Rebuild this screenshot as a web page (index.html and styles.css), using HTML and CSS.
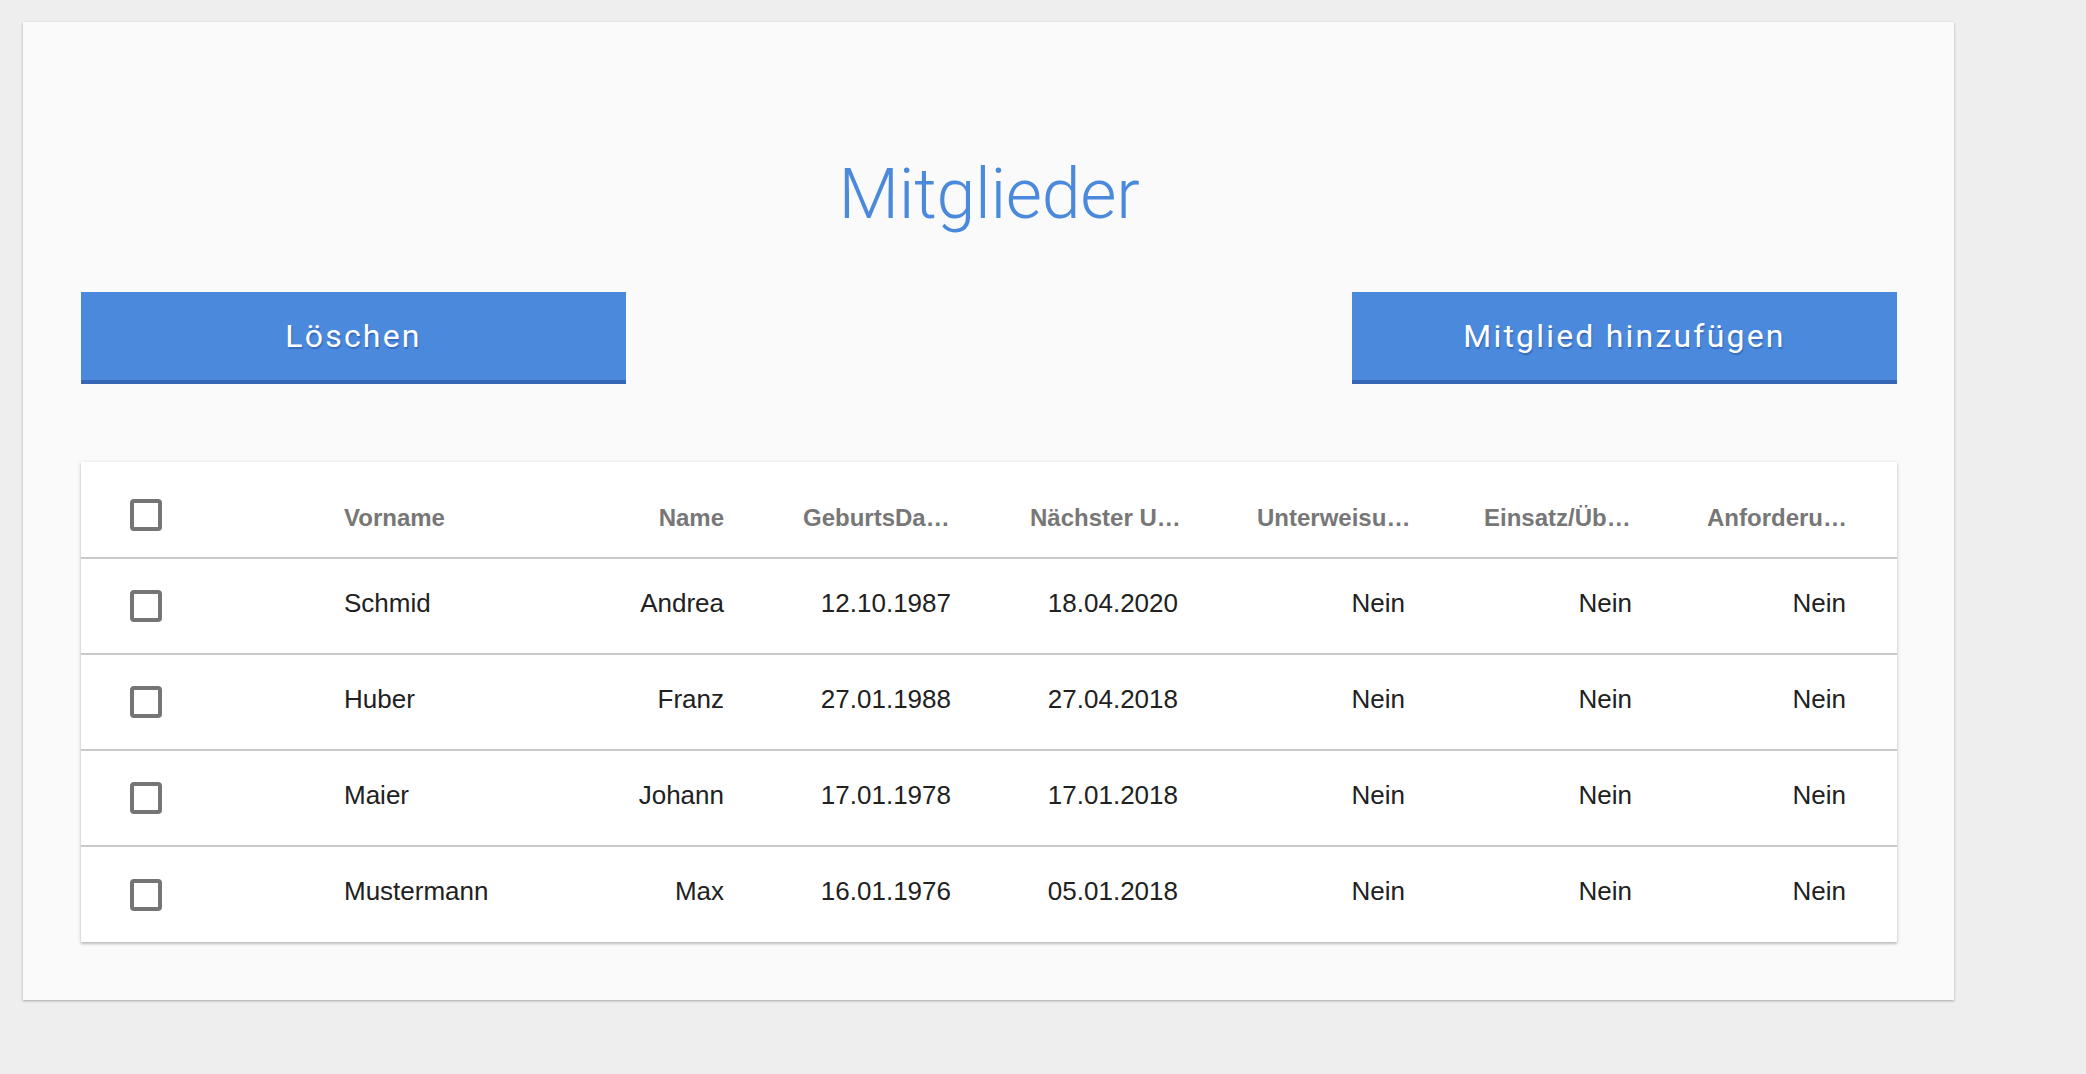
FILE: index.html
```html
<!DOCTYPE html>
<html lang="de">
<head>
<meta charset="utf-8">
<title>Mitglieder</title>
<link rel="stylesheet" href="styles.css">
</head>
<body>
<main class="card">
  <h1 class="title">Mitglieder</h1>
  <div class="actions">
    <button class="btn">Löschen</button>
    <button class="btn">Mitglied hinzufügen</button>
  </div>
  <div class="table-wrap">
    <table class="members">
      <colgroup>
        <col class="c-check">
        <col class="c-first">
        <col class="c-mid">
        <col class="c-mid">
        <col class="c-mid">
        <col class="c-mid">
        <col class="c-mid">
        <col class="c-last">
      </colgroup>
      <thead>
        <tr>
          <th class="check"><span class="box"></span></th>
          <th class="left">Vorname</th>
          <th class="plain">Name</th>
          <th>GeburtsDatum</th>
          <th>Nächster Untersuchungstermin</th>
          <th>Unterweisung</th>
          <th>Einsatz/Übung</th>
          <th class="last">Anforderung</th>
        </tr>
      </thead>
      <tbody>
        <tr>
          <td class="check"><span class="box"></span></td>
          <td class="left">Schmid</td>
          <td>Andrea</td>
          <td>12.10.1987</td>
          <td>18.04.2020</td>
          <td>Nein</td>
          <td>Nein</td>
          <td class="last">Nein</td>
        </tr>
        <tr>
          <td class="check"><span class="box"></span></td>
          <td class="left">Huber</td>
          <td>Franz</td>
          <td>27.01.1988</td>
          <td>27.04.2018</td>
          <td>Nein</td>
          <td>Nein</td>
          <td class="last">Nein</td>
        </tr>
        <tr>
          <td class="check"><span class="box"></span></td>
          <td class="left">Maier</td>
          <td>Johann</td>
          <td>17.01.1978</td>
          <td>17.01.2018</td>
          <td>Nein</td>
          <td>Nein</td>
          <td class="last">Nein</td>
        </tr>
        <tr>
          <td class="check"><span class="box"></span></td>
          <td class="left">Mustermann</td>
          <td>Max</td>
          <td>16.01.1976</td>
          <td>05.01.2018</td>
          <td>Nein</td>
          <td>Nein</td>
          <td class="last">Nein</td>
        </tr>
      </tbody>
    </table>
  </div>
</main>
</body>
</html>
```

FILE: styles.css
```css
html, body {
  margin: 0;
  padding: 0;
}

body {
  background: #eeeeee;
  padding: 22px 0 0 23px;
  font-family: "Liberation Sans", Arial, sans-serif;
  min-height: 1074px;
  box-sizing: border-box;
}

.card {
  display: flex;
  flex-direction: column;
  width: 1931px;
  height: 978px;
  box-sizing: border-box;
  background: #fafafa;
  padding: 0 57px 0 58px;
  box-shadow: 0 1px 3px rgba(0, 0, 0, 0.12), 0 1px 2px rgba(0, 0, 0, 0.2);
}

.title {
  margin: 0;
  padding-top: 131px;
  padding-bottom: 57px;
  text-align: center;
  font-family: Roboto, "Liberation Sans", sans-serif;
  font-weight: 300;
  font-size: 70px;
  line-height: 82px;
  color: #4a89dc;
  letter-spacing: -0.3px;
}

.actions {
  display: flex;
  justify-content: space-between;
}

.btn {
  width: 545px;
  height: 92px;
  box-sizing: border-box;
  border: 0;
  border-bottom: 4px solid #3766b5;
  background: #4a89dc;
  color: #ffffff;
  font-family: Roboto, "Liberation Sans", sans-serif;
  font-size: 32px;
  letter-spacing: 2.2px;
  padding: 0;
  text-shadow: 1px 2px 1px rgba(30, 70, 150, 0.45);
  cursor: pointer;
}

.table-wrap {
  margin-top: 78px;
  background: #ffffff;
  box-shadow: 0 1px 4px rgba(0, 0, 0, 0.18), 0 2px 2px rgba(0, 0, 0, 0.14);
}

.members {
  width: 1816px;
  table-layout: fixed;
  border-collapse: collapse;
}

.c-check { width: 216px; }
.c-first { width: 224px; }
.c-mid { width: 227px; }
.c-last { width: 241px; }

.members th,
.members td {
  text-align: right;
  white-space: nowrap;
  overflow: hidden;
  text-overflow: ellipsis;
}

.members th {
  height: 96px;
  padding: 16px 18px 0 55px;
  box-sizing: border-box;
  font-size: 24px;
  font-weight: bold;
  color: #777777;
  border-bottom: 2px solid #c9c9c9;
}

.members td {
  height: 96px;
  padding: 0 24px 6px 49px;
  box-sizing: border-box;
  font-size: 26px;
  color: #212121;
  border-bottom: 2px solid #c9c9c9;
}

.members tbody tr:last-child td {
  border-bottom: 0;
}

.members .left {
  text-align: left;
  padding-left: 47px;
}

.members th.plain {
  padding-right: 24px;
}

.members td.last {
  padding-right: 51px;
}

.members th.last {
  padding-left: 51px;
  padding-right: 48px;
}

.members .check {
  padding-left: 49px;
  text-align: left;
}

.members th.check {
  padding-top: 10px;
}

.members td.check {
  padding-bottom: 0;
}

.box {
  display: block;
  width: 32px;
  height: 32px;
  box-sizing: border-box;
  border: 4px solid #757575;
  border-radius: 4px;
}
```
